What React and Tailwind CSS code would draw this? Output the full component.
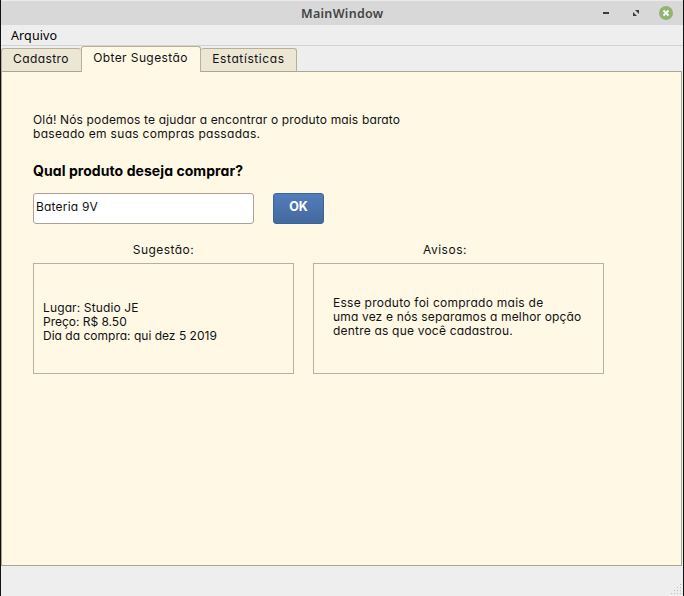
const tabs = [
  { label: 'Cadastro', cls: 'mt-[2px] h-[24px] w-[80px] border-r-0 bg-[#ece6d5] pt-[2px] pr-px tracking-[0.4px]' },
  { label: 'Obter Sugestão', cls: 'h-[26px] w-[120px] bg-[#fff8e5] pt-[3px] pr-px tracking-[0.4px]' },
  { label: 'Estatísticas', cls: 'mt-[2px] h-[24px] w-[96px] border-l-0 bg-[#ece6d5] pt-[2px] tracking-[0.6px]' },
];

function TitleBar() {
  return (
    <header className="flex h-[25px] shrink-0 items-center border-t border-[#ebebeb] bg-[#d8d8d8] pl-[300px] pr-[10px] font-['Noto_Sans',sans-serif]">
      <h1 className="w-[84px] whitespace-nowrap pt-px text-[12.5px] font-semibold leading-[24px] tracking-[0.3px] text-[#444]">MainWindow</h1>
      <svg className="ml-auto" width="72" height="14" viewBox="0 0 72 14">
        <path d="M2 6h6v2H2z" fill="#3c3c3c" />
        <path d="M34 4h4v4zM32 6v4h4z" fill="#3c3c3c" />
        <circle cx="65" cy="7" r="7" fill="#92b372" />
        <path d="M62.5 4.5l5 5M67.5 4.5l-5 5" stroke="#fff" strokeWidth="2" />
      </svg>
    </header>
  );
}

export default function App() {
  return (
    <div className="flex h-[596px] w-[684px] flex-col overflow-hidden border-l border-r border-[#111] bg-[#eeeeee] font-['Inter',sans-serif] text-[12px] leading-[14px] text-[#111] [font-feature-settings:'cv11']">
      <TitleBar />
      <nav className="h-[21px] shrink-0 border-b border-[#d2d2d2] pl-[10px] pt-[1px] font-['Noto_Sans',sans-serif] text-[12.5px] leading-[19px] text-black">
        <span className="tracking-[0.1px]">Arquivo</span>
      </nav>
      <div className="relative z-10 -mb-px flex h-[26px] shrink-0">
        {tabs.map((t) => (
          <div
            key={t.label}
            className={`whitespace-nowrap rounded-t-[3px] border border-b-0 border-[#b8af98] text-center leading-[16px] ${t.cls} ${t.label === 'Obter Sugestão' ? '' : 'shadow-[inset_0_-1px_0_#aaa594]'}`}
          >
            {t.label}
          </div>
        ))}
      </div>
      <main className="mr-px h-[495px] shrink-0 border border-[#aaa594] bg-[#fff8e5] pl-[31px] pt-[41px]">
        <p className="whitespace-nowrap">
          <span className="tracking-[0.15px]">Olá! Nós podemos te ajudar a encontrar o produto mais barato</span>
          <br />
          <span className="tracking-[0.31px]">baseado em suas compras passadas.</span>
        </p>
        <h2 className="mt-[21px] h-[18px] whitespace-nowrap text-[14px] font-bold leading-[18px] tracking-[0.07px] text-black">Qual produto deseja comprar?</h2>
        <div className="mt-[13px] flex gap-[19px]">
          <input
            className="h-[31px] w-[221px] rounded-[3px] border border-[#aaa295] bg-white pb-[5px] pl-[2px] tracking-[0.2px] outline-none"
            defaultValue="Bateria 9V"
          />
          <button className="h-[31px] w-[51px] rounded-[3px] border border-[#336796] bg-linear-to-b from-[#527dbb] to-[#44699f] pb-[3px] text-[12.5px] font-bold text-white">OK</button>
        </div>
        <div className="mt-[19px] flex gap-[19px]">
          <section className="w-[261px]">
            <h3 className="text-center tracking-[0.45px]">Sugestão:</h3>
            <div className="mt-[6px] h-[111px] whitespace-nowrap border border-[#b9b19f] pl-[9px] pt-[37px]">
              <p className="tracking-[0.13px]">Lugar: Studio JE</p>
              <p className="tracking-[-0.02px]">Preço: R$ 8.50</p>
              <p className="tracking-[0.01px]">Dia da compra: qui dez 5 2019</p>
            </div>
          </section>
          <section className="w-[291px]">
            <h3 className="pl-[110px] tracking-[0.5px]">Avisos:</h3>
            <div className="mt-[6px] h-[111px] whitespace-nowrap border border-[#b9b19f] pl-[19px] pt-[32px]">
              <p className="tracking-[0.26px]">Esse produto foi comprado mais de</p>
              <p className="tracking-[0.16px]">uma vez e nós separamos a melhor opção</p>
              <p className="tracking-[0.2px]">dentre as que você cadastrou.</p>
            </div>
          </section>
        </div>
      </main>
      <footer className="flex flex-1 items-end justify-end">
        <svg width="12" height="12" viewBox="0 0 12 12" fill="#bcbcbc">
          <path d="M9 0h1v1H9zM6 3h1v1H6zM9 3h1v1H9zM3 6h1v1H3zM6 6h1v1H6zM9 6h1v1H9zM0 9h1v1H0zM3 9h1v1H3zM6 9h1v1H6zM9 9h1v1H9z" />
        </svg>
      </footer>
    </div>
  );
}
